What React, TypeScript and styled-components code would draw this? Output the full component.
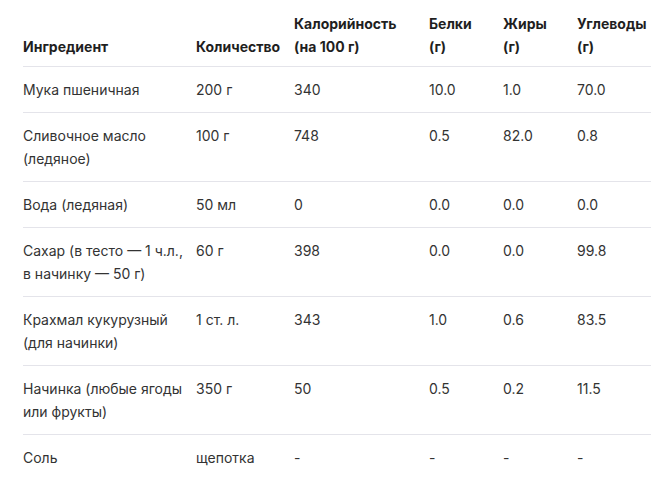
import React from "react";
import styled, { createGlobalStyle } from "styled-components";

const Global = createGlobalStyle`
  html, body { margin: 0; padding: 0; background: #ffffff; }
  body { font-family: Inter, "Noto Sans", sans-serif; }
`;

const Page = styled.div`
  padding: 0 16px 0 23px;
`;

const Table = styled.table`
  width: 628px;
  border-collapse: collapse;
  table-layout: fixed;
  font-size: 14px;
  line-height: 23px;
  color: #333333;
`;

const Th = styled.th`
  text-align: left;
  vertical-align: bottom;
  font-weight: 700;
  color: #1f1f1f;
  padding: 12px 16px 8px 0;
  border-bottom: 1px solid #e4e4ea;
  &:first-child { padding-right: 8px; }
  &:last-child { padding-right: 0; }
`;

const Tr = styled.tr<{ $last?: boolean }>`
  border-bottom: ${(p) => (p.$last ? "none" : "1px solid #e4e4ea")};
`;

const Td = styled.td`
  vertical-align: top;
  padding: 11px 16px 11px 0;
  font-weight: 400;
  &:first-child { padding-right: 6px; }
  &:last-child { padding-right: 0; }
`;

const cols = [173, 98, 135, 74, 74, 74];

const rows: string[][] = [
  ["Мука пшеничная", "200 г", "340", "10.0", "1.0", "70.0"],
  ["Сливочное масло (ледяное)", "100 г", "748", "0.5", "82.0", "0.8"],
  ["Вода (ледяная)", "50 мл", "0", "0.0", "0.0", "0.0"],
  ["Сахар (в тесто — 1\u00a0ч.л., в начинку — 50 г)", "60 г", "398", "0.0", "0.0", "99.8"],
  ["Крахмал кукурузный (для начинки)", "1 ст. л.", "343", "1.0", "0.6", "83.5"],
  ["Начинка (любые ягоды или фрукты)", "350 г", "50", "0.5", "0.2", "11.5"],
  ["Соль", "щепотка", "-", "-", "-", "-"],
];

export default function App() {
  return (
    <Page>
      <Global />
      <Table>
        <colgroup>
          {cols.map((w, i) => (
            <col key={i} style={{ width: w }} />
          ))}
        </colgroup>
        <thead>
          <tr>
            <Th>Ингредиент</Th>
            <Th>Количество</Th>
            <Th>Калорийность (на 100 г)</Th>
            <Th>Белки (г)</Th>
            <Th>Жиры (г)</Th>
            <Th>Углеводы (г)</Th>
          </tr>
        </thead>
        <tbody>
          {rows.map((r, i) => (
            <Tr key={i} $last={i === rows.length - 1}>
              {r.map((c, j) => (
                <Td key={j}>{c}</Td>
              ))}
            </Tr>
          ))}
        </tbody>
      </Table>
    </Page>
  );
}
